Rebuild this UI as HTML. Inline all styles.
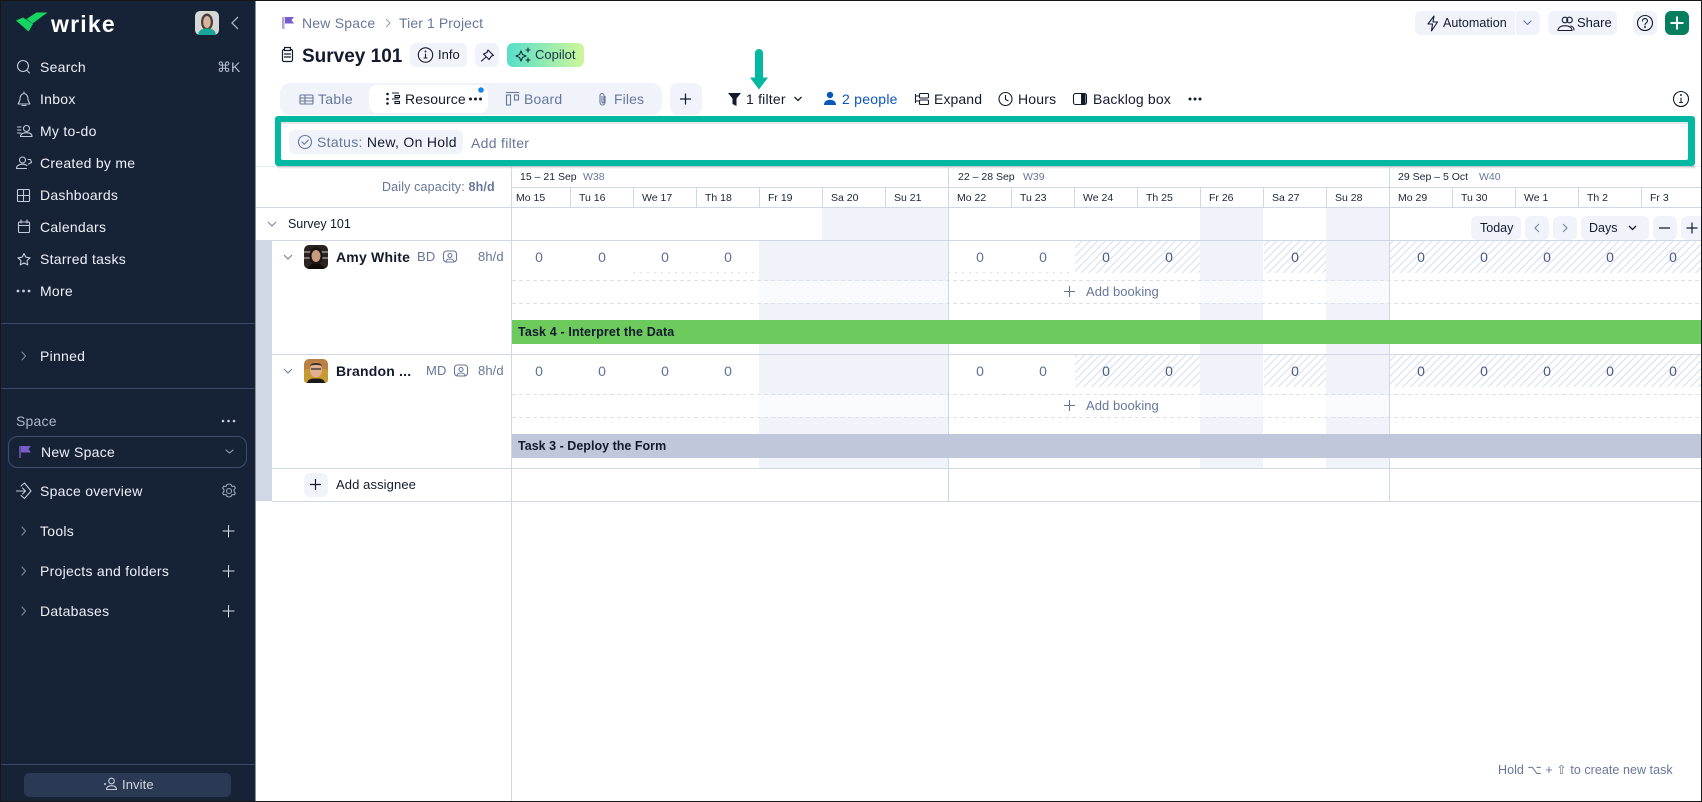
<!DOCTYPE html>
<html lang="en"><head><meta charset="utf-8"><title>Survey 101</title>
<style>
html,body{margin:0;padding:0;width:1702px;height:802px;overflow:hidden;background:#fff}
body{position:relative;font-family:"Liberation Sans",sans-serif;font-size:14px;color:#141a2e}
svg.l{position:absolute;left:0;top:0}
.t{position:absolute;white-space:nowrap;height:20px;line-height:20px;letter-spacing:.2px}
.s{color:#eef1f7;letter-spacing:.27px}
.g{color:#67769a}
.d{font-size:10.5px;color:#1c2338;letter-spacing:0}
.n{color:#5f7096;width:20px;text-align:center;letter-spacing:0}
.m{color:#4a5a80}
.b{font-weight:bold}
</style></head><body>
<svg class="l" width="1702" height="802" viewBox="0 0 1702 802" fill="none">
<defs>
<pattern id="h" width="5.5" height="5.5" patternUnits="userSpaceOnUse" patternTransform="rotate(45)"><rect width="5.5" height="5.5" fill="#fff"/><rect width="1" height="5.5" fill="#d6ddef"/></pattern>
<linearGradient id="sh" x1="0" x2="0" y1="0" y2="1"><stop offset="0" stop-color="#b4b8c0"/><stop offset="1" stop-color="#fff" stop-opacity="0"/></linearGradient>
<linearGradient id="cp" x1="0" x2="1"><stop offset="0" stop-color="#57dfc9"/><stop offset="1" stop-color="#cff69a"/></linearGradient>
</defs>
<!-- shaded -->
<g fill="#f0f3f9">
<rect x="822" y="208" width="126" height="32"/><rect x="1200" y="208" width="63" height="32"/><rect x="1326" y="208" width="63" height="32"/>
<rect x="759" y="241" width="189" height="113"/><rect x="1200" y="241" width="63" height="113"/><rect x="1326" y="241" width="63" height="113"/>
<rect x="759" y="355" width="189" height="113"/><rect x="1200" y="355" width="63" height="113"/><rect x="1326" y="355" width="63" height="113"/>
</g>
<rect x="512" y="281" width="1189" height="22" fill="#fff" fill-opacity=".6"/><rect x="512" y="395" width="1189" height="22" fill="#fff" fill-opacity=".6"/>
<g fill="url(#h)">
<rect x="1075" y="241" width="125" height="32"/><rect x="1264" y="241" width="62" height="32"/><rect x="1390" y="241" width="311" height="32"/>
<rect x="1075" y="355" width="125" height="32"/><rect x="1264" y="355" width="62" height="32"/><rect x="1390" y="355" width="311" height="32"/>
</g>
<g stroke="#dbe1ee" stroke-dasharray="4 3">
<path d="M512 280.5H1701M512 303.5H1701M512 394.5H1701M512 417.5H1701"/>
</g>
<g stroke="#dbe1ee" stroke-dasharray="2 5"><path d="M633 272.5H759M948 272.5H1074"/></g>
<!-- strip -->
<rect x="256" y="241" width="16" height="260" fill="#d0d8e8"/>
<!-- grid lines -->
<g fill="#d0d8e8">
<rect x="511" y="187" width="1190" height="1"/>
<rect x="256" y="207" width="1445" height="1"/>
<rect x="256" y="240" width="1445" height="1"/>
<rect x="272" y="354" width="1429" height="1"/>
<rect x="272" y="468" width="1429" height="1"/>
<rect x="272" y="501" width="1429" height="1"/>
<rect x="511" y="166" width="1" height="635"/>
<rect x="948" y="166" width="1" height="336"/>
<rect x="1389" y="166" width="1" height="336"/>
<path d="M570 188h1v19h-1zM633 188h1v19h-1zM696 188h1v19h-1zM759 188h1v19h-1zM822 188h1v19h-1zM885 188h1v19h-1zM1011 188h1v19h-1zM1074 188h1v19h-1zM1137 188h1v19h-1zM1200 188h1v19h-1zM1263 188h1v19h-1zM1326 188h1v19h-1zM1452 188h1v19h-1zM1515 188h1v19h-1zM1578 188h1v19h-1zM1641 188h1v19h-1z"/>
</g>
<!-- bars -->
<rect x="512" y="320" width="1189" height="24" fill="#6ccb5c"/>
<rect x="512" y="434" width="1189" height="24" fill="#c0c7da"/>
<!-- sidebar -->
<rect x="0" y="0" width="255.5" height="802" fill="#162236"/>
<path d="M16 20.5L23 17.5L33 24L28.5 31.5Z" fill="#13d660"/><path d="M26.5 19L36.5 12.5H47.5L32.5 23.5Z" fill="#13d660"/>
<g fill="#3d4b6b"><rect x="1" y="323" width="254" height="1"/><rect x="1" y="388" width="254" height="1"/><rect x="1" y="764" width="254" height="1"/></g>
<rect x="195" y="11" width="24" height="24" rx="5" fill="#d5d8d6"/>
<ellipse cx="207" cy="22" rx="6" ry="8.500" fill="#4a4038"/><ellipse cx="207" cy="22" rx="3.800" ry="6" fill="#d9b5a0"/>
<path d="M198 35c1-6 5-6.500 9-6.500s8 .5 9 6.500z" fill="#1aa598"/>
<path d="M238 17l-6 6 6 6" stroke="#a3aec4" stroke-width="1.300"/>
<g stroke="#c3ccdc" stroke-width="1.100" stroke-linecap="round" stroke-linejoin="round">
<circle cx="23" cy="66" r="5.500"/><path d="M27 70.500l2.500 2.500"/>
<path d="M24 92v1.500c-3 .5-4 3-4 6-.2 2-1.500 3-1.800 4.500h11.600c-.3-1.500-1.600-2.500-1.800-4.500 0-3-1-5.500-4-6z M22 105.500h4"/>
<path d="M17.500 127h3.500M17.500 130h3.500M17.500 133h3.500"/><circle cx="26.500" cy="128.500" r="3"/><path d="M20.500 136.500c0-2.500 2.500-3.800 6-3.800s5.500 1.300 5.500 3.800z"/>
<circle cx="22.500" cy="160" r="3"/><path d="M16.500 168.500c0-2.800 2.500-4.300 6-4.300 2 0 3.500.5 4.500 1.400 M16.500 168.500h10M28 159.500h2.500l1 3-3 1.500"/>
<rect x="17.500" y="189.500" width="12" height="12" rx="1"/><path d="M23.500 189.500v12M17.500 195.500h12"/>
<rect x="18.500" y="222" width="11" height="10.500" rx="1"/><path d="M18.500 225.500h11M21 220v3M27 220v3"/>
<path d="M24 253.500l1.800 3.700 4.200.6-3 2.900.7 4.200-3.700-2-3.700 2 .7-4.200-3-2.900 4.200-.6z"/>
<path d="M22 352l3.500 4-3.500 4" stroke="#7f8ba3"/><path d="M22 527l3.500 4-3.500 4" stroke="#7f8ba3"/><path d="M22 567l3.500 4-3.500 4" stroke="#7f8ba3"/><path d="M22 607l3.500 4-3.500 4" stroke="#7f8ba3"/>
<path d="M16.500 491h9M22.500 488l3 3-3 3M21 486l3.500-3 6.500 8-6.500 7.500-3.500-3"/>
<path d="M228.500 525.500v11.500M223 531h11M228.500 565.500v11.500M223 571h11M228.500 605.500v11.500M223 611h11" stroke="#d8dee9" stroke-width="1"/>
<circle cx="229" cy="491" r="2.500" stroke="#98a4ba"/><path d="M229 484l2 .5 1 2 2.300-.3 1 1.800-1.300 1.800v1.400l1.300 1.800-1 1.800-2.300-.3-1 2-2 .5-2-.5-1-2-2.300.3-1-1.800 1.300-1.800v-1.400l-1.300-1.800 1-1.800 2.300.3 1-2z" stroke="#98a4ba"/>
<path d="M226 450l3.500 3 3.500-3" stroke="#98a4ba"/>
</g>
<g fill="#c3ccdc"><circle cx="18" cy="291" r="1.400"/><circle cx="23.500" cy="291" r="1.400"/><circle cx="29" cy="291" r="1.400"/><circle cx="223" cy="421" r="1.300"/><circle cx="228.500" cy="421" r="1.300"/><circle cx="234" cy="421" r="1.300"/></g>
<rect x="8.500" y="436.500" width="238" height="31" rx="9" stroke="#3f4e70"/>
<rect x="19" y="446" width="2" height="12" fill="#5e4a9e"/><path d="M21 446h10l-2.500 3 2.500 3.500H21z" fill="#7a5cc8"/>
<rect x="24" y="773" width="207" height="24" rx="5" fill="#2b3954"/>
<g stroke="#c3ccdc" stroke-width="1.100" stroke-linejoin="round"><circle cx="111.500" cy="781" r="2.800"/><path d="M106.500 789.500c0-2.500 2-3.800 5-3.800s5 1.300 5 3.800z"/></g>
<circle cx="105" cy="784" r="1" fill="#c3ccdc"/>
<!-- breadcrumb -->
<rect x="282" y="17" width="2.500" height="12" fill="#b3a6dc"/><path d="M285 17h9l-2.500 3 2.500 3.500h-9z" fill="#7a5cc8"/>
<path d="M386 19l4 4-4 4" stroke="#98a4ba" stroke-width="1.200"/>
<!-- title icons -->
<g stroke="#141a2e" stroke-width="1.200" stroke-linejoin="round" stroke-linecap="round">
<rect x="282.500" y="49.500" width="10" height="12" rx="1.500"/><rect x="284.500" y="47.500" width="6" height="3" fill="#fff"/><path d="M284.500 54h6M284.500 57h6"/>
</g>
<rect x="410" y="43" width="57" height="24" rx="6" fill="#f0f3fa"/>
<rect x="475" y="43" width="24" height="24" rx="6" fill="#f0f3fa"/>
<rect x="507" y="43" width="77" height="24" rx="6" fill="url(#cp)"/>
<g stroke="#141a2e" stroke-width="1.100" stroke-linejoin="round" stroke-linecap="round">
<circle cx="425.500" cy="55" r="7.200"/><path d="M425.500 54v4M424 58h3"/><circle cx="425.500" cy="51.500" r=".4"/>
<path d="M488 50L493.500 55.500L491.500 56L489 59.500L483.500 54L487 52.500ZM485.500 57.500L481.500 61"/>
<path d="M521 51l1.500 3.500 3.500 1.500-3.500 1.500-1.500 3.500-1.500-3.500-3.500-1.500 3.500-1.500zM528 48v4M526 50h4M528 58v4M526 60h4" stroke="#0e2d3c"/>
</g>
<!-- tabs -->
<rect x="280" y="83" width="382" height="32" rx="10" fill="#f0f3fa"/>
<rect x="369" y="85" width="119" height="28" rx="8" fill="#fff"/>
<circle cx="481" cy="90" r="2.800" fill="#1488f0"/>
<rect x="670" y="83" width="32" height="32" rx="8" fill="#f0f3fa"/>
<g stroke="#67769a" stroke-width="1.100">
<rect x="300" y="95" width="13" height="9" rx="1"/><path d="M300 98h13M300 101h13M305 95v9"/>
<rect x="506.500" y="95" width="4" height="10"/><rect x="514.500" y="95" width="4" height="5"/><path d="M506 92.500h13"/>
<path d="M605 96v6.500a2.500 2.500 0 0 1-5 0v-7a2 2 0 0 1 4 0v6.500a1 1 0 0 1-2 0v-6" /></g>
<g stroke="#141a2e" stroke-width="1.100"><path d="M392 93h7M392 99h7"/><rect x="395" y="95.500" width="4.500" height="2"/><rect x="395" y="101.500" width="4.500" height="2"/></g>
<g fill="#141a2e"><circle cx="387.500" cy="94" r="1.300"/><circle cx="387.500" cy="99" r="1.300"/><circle cx="387.500" cy="103.500" r="1.300"/><circle cx="470.500" cy="99" r="1.500"/><circle cx="475.500" cy="99" r="1.500"/><circle cx="480.500" cy="99" r="1.500"/>
<circle cx="1190" cy="99" r="1.500"/><circle cx="1195" cy="99" r="1.500"/><circle cx="1200" cy="99" r="1.500"/></g>
<path d="M685.500 93.500v11M680 99h11" stroke="#141a2e" stroke-width="1.200"/>
<!-- toolbar icons -->
<path d="M728 93h13l-4.500 5.500v7.500l-4-2v-5.500z" fill="#141a2e"/>
<path d="M794.500 97l3.500 3.500 3.500-3.500" stroke="#141a2e" stroke-width="1.300"/>
<circle cx="830" cy="95" r="3.200" fill="#0b57b8"/><path d="M824 105c0-3.500 2.500-5.200 6-5.200s6 1.700 6 5.200z" fill="#0b57b8"/>
<g stroke="#141a2e" stroke-width="1.100" stroke-linejoin="round">
<path d="M915.500 94v9M915.500 96h4M915.500 101h4"/><rect x="919.500" y="93.500" width="9" height="4.500" rx="1"/><rect x="919.500" y="100" width="9" height="4.500" rx="1"/>
<circle cx="1005.500" cy="99" r="6.500"/><path d="M1005.500 95v4.500l3 1.500"/>
<rect x="1073.500" y="93.500" width="13" height="11" rx="2"/></g>
<rect x="1081" y="94" width="4.500" height="10" fill="#141a2e"/>
<!-- top right -->
<path d="M1415 17a6 6 0 0 1 6-6h94v24h-94a6 6 0 0 1-6-6zM1516 11h18a6 6 0 0 1 6 6v12a6 6 0 0 1-6 6h-18z" fill="#f0f3fa"/>
<rect x="1548" y="11" width="69" height="24" rx="6" fill="#f0f3fa"/>
<rect x="1633" y="11" width="24" height="24" rx="6" fill="#f0f3fa"/>
<rect x="1665" y="11" width="24" height="24" rx="6" fill="#077f5e"/>
<path d="M1677 16.500v13M1670.500 23h13" stroke="#fff" stroke-width="2"/>
<g stroke="#141a2e" stroke-width="1.100" stroke-linejoin="round" stroke-linecap="round">
<path d="M1434 16l-6 8h4.500l-1 7 6-9h-4.500z"/>
<path d="M1524 21l3.500 3.500 3.500-3.500" stroke="#67769a"/>
<circle cx="1565" cy="20" r="2.800"/><circle cx="1569.500" cy="20" r="2.800"/><path d="M1558 30.500c0-3 3-4.800 7-4.800s7 1.800 7 4.800z M1571 26c1.500.5 3 2 3 4"/>
<circle cx="1645" cy="23" r="7.500"/><path d="M1642.500 21c0-3.200 5-3.200 5 0 0 1.800-2.500 1.800-2.500 3.800"/><circle cx="1645" cy="27" r=".4"/>
<circle cx="1681" cy="99" r="7.500"/><path d="M1681 98v4.500M1679.500 102.500h3"/><circle cx="1681" cy="95" r=".4"/>
</g>
<!-- row icons -->
<g stroke="#7c89a6" stroke-width="1.200"><path d="M268 222l4 4 4-4M284 255l4 4 4-4M284 369l4 4 4-4"/></g>
<g stroke="#67769a" stroke-width="1.100">
<rect x="443.500" y="251" width="13" height="11" rx="3"/><circle cx="450" cy="255.500" r="2"/><path d="M446 262c0-2 2-3 4-3s4 1 4 3"/>
<rect x="454.500" y="365" width="13" height="11" rx="3"/><circle cx="461" cy="369.500" r="2"/><path d="M457 376c0-2 2-3 4-3s4 1 4 3"/>
</g>
<!-- avatars -->
<rect x="304" y="245" width="24" height="24" rx="5" fill="#2a2320"/>
<path d="M304 252h24M304 258h24" stroke="#7c7672" stroke-width="2"/>
<ellipse cx="316" cy="256" rx="6.500" ry="9" fill="#1a1412"/>
<ellipse cx="316" cy="256" rx="4.500" ry="6" fill="#c99a80"/>
<path d="M308 269c1-5 4-5 8-5s7 0 8 5z" fill="#0e0b0a"/>
<rect x="304" y="359" width="24" height="24" rx="5" fill="#b98046"/>
<rect x="304" y="369" width="24" height="14" rx="3" fill="#c89a32"/>
<ellipse cx="316" cy="370" rx="6" ry="7.500" fill="#e0b090"/><path d="M310 366c1-4 11-4 12 0-3-1.500-9-1.500-12 0z" fill="#3a2a20"/><path d="M311 369h10" stroke="#2a2422" stroke-width="1.200"/>
<path d="M307 383c1-4 4-4.500 9-4.500s8 .5 9 4.500z" fill="#1a1a1a"/>
<!-- add rows -->
<g stroke="#67769a" stroke-width="1.100"><path d="M1069.500 286v11M1064 291.500h11M1069.500 400v11M1064 405.500h11"/></g>
<rect x="304" y="473" width="24" height="24" rx="6" fill="#f0f3fa"/>
<path d="M315.500 479v11M310 484.500h11" stroke="#141a2e" stroke-width="1.200"/>
<!-- view controls -->
<g fill="#f0f3fa"><rect x="1471" y="216" width="50" height="24" rx="6"/><rect x="1525" y="216" width="24" height="24" rx="6"/><rect x="1553" y="216" width="24" height="24" rx="6"/><rect x="1581" y="216" width="68" height="24" rx="6"/><rect x="1653" y="216" width="24" height="24" rx="6"/><rect x="1681" y="216" width="24" height="24" rx="6"/></g>
<path d="M1539 224l-4 4 4 4M1563 224l4 4-4 4" stroke="#7c89a6" stroke-width="1.200"/>
<path d="M1629 226l3.500 3.500 3.500-3.500" stroke="#141a2e" stroke-width="1.300"/>
<path d="M1659 228h11M1692 222.500v11M1686.500 228h11" stroke="#141a2e" stroke-width="1.200"/>
<!-- green highlight -->
<rect x="256" y="166" width="1445" height="1" fill="#e8ecf3"/>
<rect x="277" y="166" width="1418" height="4" fill="url(#sh)"/>
<rect x="275" y="116" width="1420" height="50" rx="3" fill="#00b9a0"/>
<rect x="281" y="122" width="1407" height="38" rx="2" fill="#fff"/>
<rect x="281" y="122" width="1407" height="2" fill="#e4e6ea"/>
<rect x="289" y="130" width="174" height="24" rx="6" fill="#f0f3fa"/>
<g stroke="#67769a" stroke-width="1.100" stroke-linecap="round" stroke-linejoin="round"><circle cx="305" cy="142" r="6.500"/><path d="M302 142l2.300 2.300 4-4.300"/></g>
<!-- arrow -->
<path d="M759 53v26" stroke="#00b9a0" stroke-width="8" stroke-linecap="round"/>
<path d="M750 77.500h18l-9 12z" fill="#00b9a0"/>
<!-- outer frame -->
<rect x=".5" y=".5" width="1701" height="801" stroke="#161616"/>
</svg>

<!-- sidebar text -->
<div class="t b" style="left:51px;top:10px;height:28px;line-height:28px;font-size:23px;color:#fff;letter-spacing:1.200px">wrike</div>
<div class="t s" style="left:40px;top:57px">Search</div>
<div class="t" style="left:217px;top:57px;color:#b4bfd2;letter-spacing:0">⌘K</div>
<div class="t s" style="left:40px;top:89px">Inbox</div>
<div class="t s" style="left:40px;top:121px">My to-do</div>
<div class="t s" style="left:40px;top:153px">Created by me</div>
<div class="t s" style="left:40px;top:185px">Dashboards</div>
<div class="t s" style="left:40px;top:217px">Calendars</div>
<div class="t s" style="left:40px;top:249px">Starred tasks</div>
<div class="t s" style="left:40px;top:281px">More</div>
<div class="t s" style="left:40px;top:346px">Pinned</div>
<div class="t" style="left:16px;top:411px;color:#aeb8cb">Space</div>
<div class="t s" style="left:41px;top:442px">New Space</div>
<div class="t s" style="left:40px;top:481px">Space overview</div>
<div class="t s" style="left:40px;top:521px">Tools</div>
<div class="t s" style="left:40px;top:561px">Projects and folders</div>
<div class="t s" style="left:40px;top:601px">Databases</div>
<div class="t" style="left:122px;top:775px;color:#d3d9e5;font-size:13px;letter-spacing:.1px">Invite</div>
<!-- header text -->
<div class="t g" style="left:302px;top:13px">New Space</div>
<div class="t g" style="left:399px;top:13px;letter-spacing:.1px">Tier 1 Project</div>
<div class="t b" style="left:302px;top:45px;font-size:19px;height:24px;line-height:24px;letter-spacing:0">Survey 101</div>
<div class="t" style="left:438px;top:45px;font-size:13px;letter-spacing:0">Info</div>
<div class="t" style="left:535px;top:45px;font-size:13px;color:#12354a;letter-spacing:0">Copilot</div>
<div class="t g" style="left:318px;top:89px;letter-spacing:.3px">Table</div>
<div class="t" style="left:405px;top:89px;letter-spacing:.1px">Resource</div>
<div class="t g" style="left:524px;top:89px">Board</div>
<div class="t g" style="left:614px;top:89px;letter-spacing:.1px">Files</div>
<div class="t" style="left:746px;top:89px">1 filter</div>
<div class="t" style="left:842px;top:89px;color:#0b57b8;letter-spacing:.25px">2 people</div>
<div class="t" style="left:934px;top:89px;letter-spacing:.1px">Expand</div>
<div class="t" style="left:1018px;top:89px">Hours</div>
<div class="t" style="left:1093px;top:89px;letter-spacing:.15px">Backlog box</div>
<div class="t" style="left:1443px;top:13px;font-size:12.500px;letter-spacing:.05px">Automation</div>
<div class="t" style="left:1577px;top:13px;font-size:13px;letter-spacing:0">Share</div>
<div class="t" style="left:317px;top:132px;letter-spacing:.3px"><span class="g">Status:</span> New, On Hold</div>
<div class="t g" style="left:471px;top:133px;letter-spacing:.3px">Add filter</div>
<!-- grid header -->
<div class="t g" style="left:382px;top:177px;font-size:12.500px;letter-spacing:.15px">Daily capacity: <b>8h/d</b></div>
<div class="t d" style="left:520px;top:167px">15 – 21 Sep</div><div class="t d" style="left:583px;top:167px;color:#67769a">W38</div>
<div class="t d" style="left:958px;top:167px">22 – 28 Sep</div><div class="t d" style="left:1023px;top:167px;color:#67769a">W39</div>
<div class="t d" style="left:1398px;top:167px">29 Sep – 5 Oct</div><div class="t d" style="left:1479px;top:167px;color:#67769a">W40</div>
<div class="t d" style="left:516px;top:188px">Mo 15</div><div class="t d" style="left:579px;top:188px">Tu 16</div><div class="t d" style="left:642px;top:188px">We 17</div><div class="t d" style="left:705px;top:188px">Th 18</div><div class="t d" style="left:768px;top:188px">Fr 19</div><div class="t d" style="left:831px;top:188px">Sa 20</div><div class="t d" style="left:894px;top:188px">Su 21</div>
<div class="t d" style="left:957px;top:188px">Mo 22</div><div class="t d" style="left:1020px;top:188px">Tu 23</div><div class="t d" style="left:1083px;top:188px">We 24</div><div class="t d" style="left:1146px;top:188px">Th 25</div><div class="t d" style="left:1209px;top:188px">Fr 26</div><div class="t d" style="left:1272px;top:188px">Sa 27</div><div class="t d" style="left:1335px;top:188px">Su 28</div>
<div class="t d" style="left:1398px;top:188px">Mo 29</div><div class="t d" style="left:1461px;top:188px">Tu 30</div><div class="t d" style="left:1524px;top:188px">We 1</div><div class="t d" style="left:1587px;top:188px">Th 2</div><div class="t d" style="left:1650px;top:188px">Fr 3</div>
<!-- left col -->
<div class="t" style="left:288px;top:214px;font-size:12.500px;letter-spacing:-.05px">Survey 101</div>
<div class="t b" style="left:336px;top:247px">Amy White</div>
<div class="t g" style="left:417px;top:247px;font-size:13px">BD</div>
<div class="t g" style="left:478px;top:247px;font-size:13px;letter-spacing:.1px">8h/d</div>
<div class="t b" style="left:336px;top:361px">Brandon ...</div>
<div class="t g" style="left:426px;top:361px;font-size:13px">MD</div>
<div class="t g" style="left:478px;top:361px;font-size:13px;letter-spacing:.1px">8h/d</div>
<div class="t" style="left:336px;top:475px;font-size:13px;letter-spacing:.1px">Add assignee</div>
<!-- zero cells -->
<div class="t n" style="left:529px;top:247px">0</div><div class="t n" style="left:592px;top:247px">0</div><div class="t n" style="left:655px;top:247px">0</div><div class="t n" style="left:718px;top:247px">0</div><div class="t n" style="left:970px;top:247px">0</div><div class="t n" style="left:1033px;top:247px">0</div><div class="t n m" style="left:1096px;top:247px">0</div><div class="t n m" style="left:1159px;top:247px">0</div><div class="t n m" style="left:1285px;top:247px">0</div><div class="t n m" style="left:1411px;top:247px">0</div><div class="t n m" style="left:1474px;top:247px">0</div><div class="t n m" style="left:1537px;top:247px">0</div><div class="t n m" style="left:1600px;top:247px">0</div><div class="t n m" style="left:1663px;top:247px">0</div>
<div class="t n" style="left:529px;top:361px">0</div><div class="t n" style="left:592px;top:361px">0</div><div class="t n" style="left:655px;top:361px">0</div><div class="t n" style="left:718px;top:361px">0</div><div class="t n" style="left:970px;top:361px">0</div><div class="t n" style="left:1033px;top:361px">0</div><div class="t n m" style="left:1096px;top:361px">0</div><div class="t n m" style="left:1159px;top:361px">0</div><div class="t n m" style="left:1285px;top:361px">0</div><div class="t n m" style="left:1411px;top:361px">0</div><div class="t n m" style="left:1474px;top:361px">0</div><div class="t n m" style="left:1537px;top:361px">0</div><div class="t n m" style="left:1600px;top:361px">0</div><div class="t n m" style="left:1663px;top:361px">0</div>
<div class="t g" style="left:1086px;top:282px;font-size:13px;letter-spacing:.05px">Add booking</div>
<div class="t g" style="left:1086px;top:396px;font-size:13px;letter-spacing:.05px">Add booking</div>
<div class="t b" style="left:518px;top:322px;font-size:12.500px;letter-spacing:.14px">Task 4 - Interpret the Data</div>
<div class="t b" style="left:518px;top:436px;font-size:12.500px;letter-spacing:.02px">Task 3 - Deploy the Form</div>
<div class="t" style="left:1480px;top:218px;font-size:12.500px;letter-spacing:0">Today</div>
<div class="t" style="left:1589px;top:218px;font-size:12.500px;letter-spacing:0">Days</div>
<div class="t g" style="left:1498px;top:760px;font-size:12.500px;letter-spacing:.05px">Hold ⌥ + ⇧ to create new task</div>
</body></html>
